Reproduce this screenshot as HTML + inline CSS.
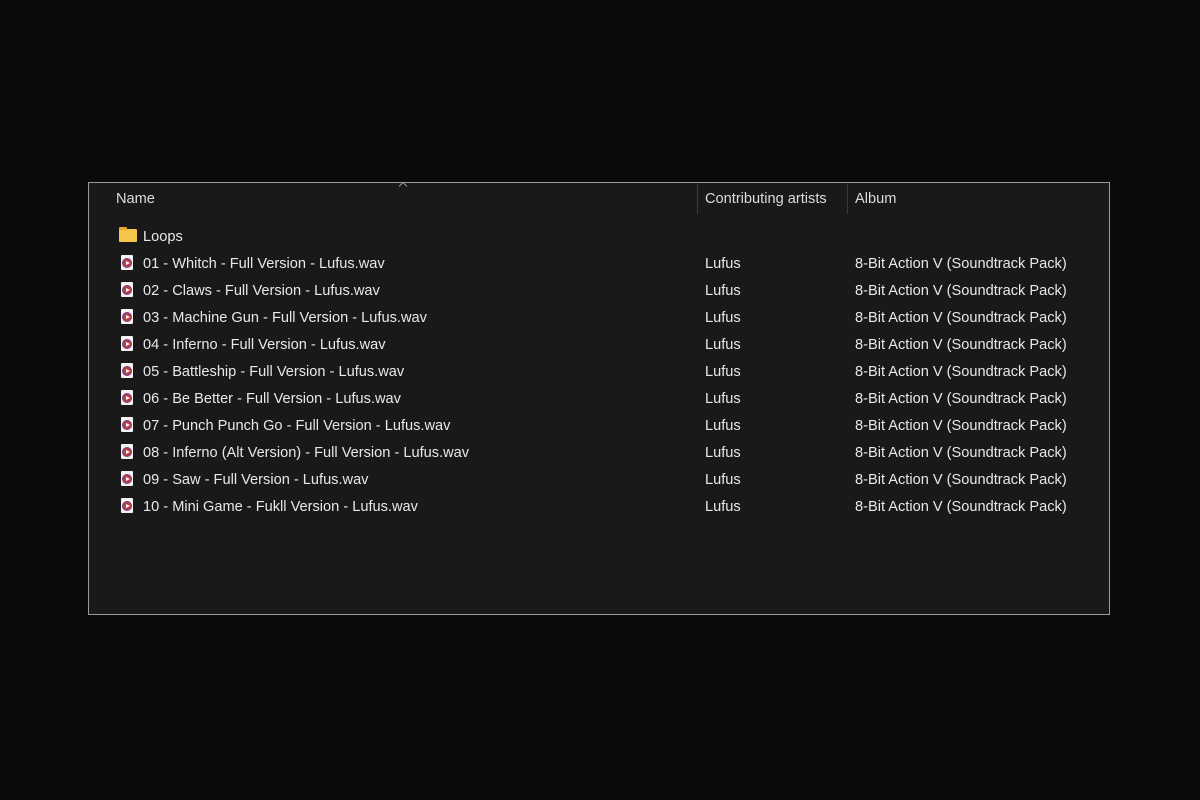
<!DOCTYPE html>
<html><head><meta charset="utf-8"><style>
html,body{margin:0;padding:0;background:#0a0a0a;width:1200px;height:800px;overflow:hidden}
body{font-family:"Liberation Sans",sans-serif;font-size:14.6px;color:#e8e8e8}
.win{position:absolute;left:88px;top:182px;width:1020px;height:431px;border:1px solid #9a9a9a;background:#191919}
.t{position:absolute;white-space:nowrap;line-height:16px}
.div{position:absolute;top:1px;width:1px;height:30px;background:#3a3a3a}
.caret{position:absolute;left:311px;top:0px;width:5px;height:5px;border-left:1px solid #999;border-top:1px solid #999;transform:rotate(45deg)}
.ic{position:absolute;width:12px;height:15px;background:#f2f2f2;border-radius:1px}
.ic::before{content:"";position:absolute;left:2px;top:4px;width:8px;height:8px;border-radius:50%;background:#b8403a;box-shadow:0 0 0 1px #7a3a9a}
.ic::after{content:"";position:absolute;left:5px;top:6px;border-left:4px solid #fff;border-top:2px solid transparent;border-bottom:2px solid transparent}
.fold{position:absolute;left:30px;top:46px;width:18px;height:13px;background:#f5c44a;border-radius:1px}
.fold::before{content:"";position:absolute;left:0;top:-2px;width:8px;height:3px;background:#e8aa2e;border-radius:1px 1px 0 0}
</style></head><body>
<div class="win">
<div class="caret"></div>
<div class="t" style="left:27px;top:8px;color:#dcdcdc">Name</div>
<div class="div" style="left:608px"></div>
<div class="t" style="left:616px;top:8px;color:#dcdcdc">Contributing artists</div>
<div class="div" style="left:758px"></div>
<div class="t" style="left:766px;top:8px;color:#dcdcdc">Album</div>
<div class="fold"></div>
<div class="t" style="left:54px;top:46px">Loops</div>
</div>
<div style="position:absolute;left:0;top:0">
<div class="ic" style="left:121px;top:255px"></div><div class="t" style="left:143px;top:256px">01 - Whitch - Full Version - Lufus.wav</div><div class="t" style="left:705px;top:256px">Lufus</div><div class="t" style="left:855px;top:256px">8-Bit Action V (Soundtrack Pack)</div>
<div class="ic" style="left:121px;top:282px"></div><div class="t" style="left:143px;top:283px">02 - Claws - Full Version - Lufus.wav</div><div class="t" style="left:705px;top:283px">Lufus</div><div class="t" style="left:855px;top:283px">8-Bit Action V (Soundtrack Pack)</div>
<div class="ic" style="left:121px;top:309px"></div><div class="t" style="left:143px;top:310px">03 - Machine Gun - Full Version - Lufus.wav</div><div class="t" style="left:705px;top:310px">Lufus</div><div class="t" style="left:855px;top:310px">8-Bit Action V (Soundtrack Pack)</div>
<div class="ic" style="left:121px;top:336px"></div><div class="t" style="left:143px;top:337px">04 - Inferno - Full Version - Lufus.wav</div><div class="t" style="left:705px;top:337px">Lufus</div><div class="t" style="left:855px;top:337px">8-Bit Action V (Soundtrack Pack)</div>
<div class="ic" style="left:121px;top:363px"></div><div class="t" style="left:143px;top:364px">05 - Battleship - Full Version - Lufus.wav</div><div class="t" style="left:705px;top:364px">Lufus</div><div class="t" style="left:855px;top:364px">8-Bit Action V (Soundtrack Pack)</div>
<div class="ic" style="left:121px;top:390px"></div><div class="t" style="left:143px;top:391px">06 - Be Better - Full Version - Lufus.wav</div><div class="t" style="left:705px;top:391px">Lufus</div><div class="t" style="left:855px;top:391px">8-Bit Action V (Soundtrack Pack)</div>
<div class="ic" style="left:121px;top:417px"></div><div class="t" style="left:143px;top:418px">07 - Punch Punch Go - Full Version - Lufus.wav</div><div class="t" style="left:705px;top:418px">Lufus</div><div class="t" style="left:855px;top:418px">8-Bit Action V (Soundtrack Pack)</div>
<div class="ic" style="left:121px;top:444px"></div><div class="t" style="left:143px;top:445px">08 - Inferno (Alt Version) - Full Version - Lufus.wav</div><div class="t" style="left:705px;top:445px">Lufus</div><div class="t" style="left:855px;top:445px">8-Bit Action V (Soundtrack Pack)</div>
<div class="ic" style="left:121px;top:471px"></div><div class="t" style="left:143px;top:472px">09 - Saw - Full Version - Lufus.wav</div><div class="t" style="left:705px;top:472px">Lufus</div><div class="t" style="left:855px;top:472px">8-Bit Action V (Soundtrack Pack)</div>
<div class="ic" style="left:121px;top:498px"></div><div class="t" style="left:143px;top:499px">10 - Mini Game - Fukll Version - Lufus.wav</div><div class="t" style="left:705px;top:499px">Lufus</div><div class="t" style="left:855px;top:499px">8-Bit Action V (Soundtrack Pack)</div>
</div>
</body></html>
